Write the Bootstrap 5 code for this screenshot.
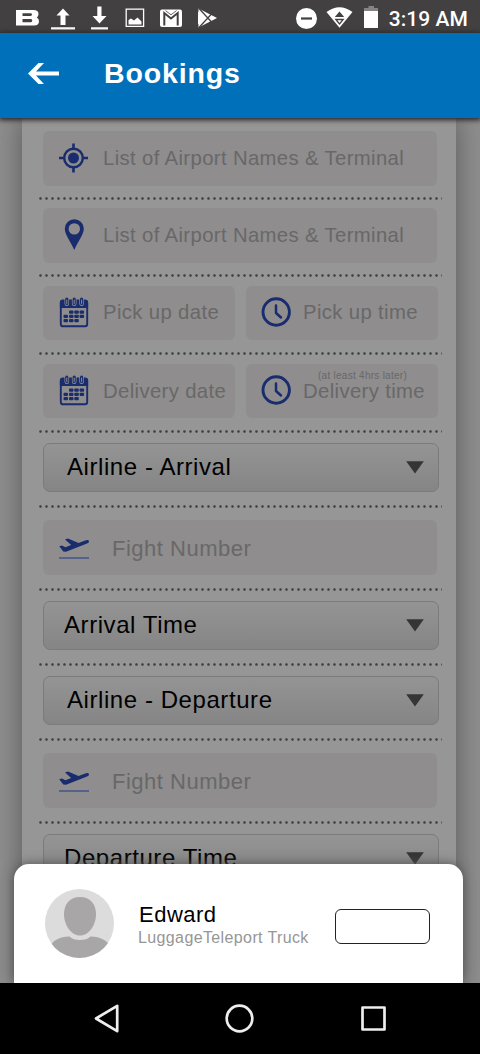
<!DOCTYPE html>
<html lang="en">
<head>
<meta charset="utf-8">
<meta name="viewport" content="width=device-width, initial-scale=1">
<title>Bookings</title>
<link href="https://cdn.jsdelivr.net/npm/bootstrap@5.3.0/dist/css/bootstrap.min.css" rel="stylesheet">
<style>
body{font-family:"Liberation Sans",Arial,sans-serif;background:#8d8d8d;color:#000}
svg{display:block;flex:none}
.phone{width:480px;height:1054px}
.status{height:33px;background:#424041;color:#fff}
.status .clock{font:500 21px/33px Roboto,sans-serif;letter-spacing:.05px;padding-top:3px}
.topbar{height:85px;background:#0070bb;color:#fff;box-shadow:0 1px 5px 1px #222;z-index:2;padding-left:28px}
.topbar h1{font-size:28.5px;letter-spacing:.85px;line-height:32px;margin:0 0 6px 45px}
.topbar svg{margin-bottom:4px}
.screen{height:865px;background:#8e8e8e}
.panel{width:434px;margin-left:22px;height:865px;background:#969696;padding:13px 15px 0 21px;box-shadow:0 0 26px 1px #5c5c5c}
.field{height:55px;width:394px;border-radius:6px;background:#8f8d8e;color:#686868;font-size:20.3px;letter-spacing:.37px;padding:0 0 2px 16px;white-space:nowrap}
.field svg{width:30px;margin-right:14px}
.place span{padding-top:2px}
.pair{height:54px;width:395px;gap:11px}
.pair .field{height:54px;width:192px}
.pair .field+.field{padding-left:15px}
.pair .field+.field svg{margin-right:12px}
.nudge{padding-top:2px}
.hint{font-size:10px;letter-spacing:.27px;line-height:10px;left:15px;top:-3px}
.flight{font-size:22px;letter-spacing:.5px;padding-bottom:0}
.flight svg{margin-right:23px}
.flight span{padding-top:1px}
.picker{height:49px;width:396px;border:1px solid #7b7b7b;border-bottom-width:1.5px;border-radius:7px;background:linear-gradient(#949494,#858585);font-size:24px;letter-spacing:.57px;padding:0 14px 0 23px}
.picker span{margin-bottom:2px}
.picker.time{padding-left:20px}
.dots{height:3px;width:402px;margin:13px 0 10px -4px;background:radial-gradient(circle at 1.5px 1.5px,#404040 .8px,rgba(64,64,64,0) 1.7px) 0 0/6px 3px repeat-x;box-sizing:content-box;padding-right:1px}
.d-a{margin-top:11px;margin-bottom:8px}
.d-b{margin-top:11px;margin-bottom:9px}
.d-c{margin-top:12px;margin-bottom:9px}
.d-d{margin-top:12px}
.d-e{margin-bottom:12px}
.sheet{left:14px;bottom:0;width:449px;height:119px;background:#fff;border-radius:15px 15px 0 0;box-shadow:0 0 12px #505050;padding:0 33px 0 31px}
.driver{margin-left:24px;width:197px;padding-top:2px}
.driver .who{font-size:22px;letter-spacing:.5px;line-height:25px;padding-left:1px}
.driver .org{font-size:16px;letter-spacing:.38px;line-height:19px;color:#969696;white-space:nowrap;margin-top:1px}
.action{width:95px;height:35px;border:1px solid #222;border-radius:6px;background:#fff;padding:0;margin-top:6px}
.navkeys{height:71px;background:#000}
</style>
</head>
<body>
<svg width="0" height="0" class="position-absolute" aria-hidden="true">
  <symbol id="cal" viewBox="0 0 30 31">
    <path d="M1.800 5.500Q1.800 3.500 3.800 3.500H26.200Q28.200 3.500 28.200 5.500V27Q28.200 29.300 26 29.300H4Q1.800 29.300 1.800 27Z" fill="none" stroke="#182c6e" stroke-width="1.900"/>
    <path d="M.9 11V6Q1 3 4 3H26Q29 3 29.100 6V11Z" fill="#182c6e"/>
    <g stroke="#8f8d8e" stroke-linecap="round" stroke-width="4.600"><path d="M7.800 2V6.700M15.200 2V6.700M22.600 2V6.700"/></g>
    <g stroke="#182c6e" stroke-linecap="round" stroke-width="3.200"><path d="M7.800 2.200V6.400M15.200 2.200V6.400M22.600 2.200V6.400"/></g>
    <g stroke="#8f8d8e" stroke-linecap="round" stroke-width="1"><path d="M7.800 3V6.500M15.200 3V6.500M22.600 3V6.500"/></g>
    <g fill="#182c6e"><rect x="10" y="13.500" width="4.500" height="3.200" rx="1"/><rect x="15.300" y="13.500" width="4.500" height="3.200" rx="1"/><rect x="20.600" y="13.500" width="4.500" height="3.200" rx="1"/><rect x="4.500" y="17.800" width="4.500" height="3.200" rx="1"/><rect x="10" y="17.800" width="4.500" height="3.200" rx="1"/><rect x="15.300" y="17.800" width="4.500" height="3.200" rx="1"/><rect x="20.600" y="17.800" width="4.500" height="3.200" rx="1"/><rect x="4.500" y="22.100" width="4.500" height="3.200" rx="1"/><rect x="10" y="22.100" width="4.500" height="3.200" rx="1"/><rect x="15.300" y="22.100" width="4.500" height="3.200" rx="1"/></g>
  </symbol>
  <symbol id="clk" viewBox="0 0 30 30"><circle cx="15.200" cy="15" r="13.200" fill="none" stroke="#182c6e" stroke-width="2.900"/><path d="M15 8.500V16L20 20.500" fill="none" stroke="#182c6e" stroke-width="2.500" stroke-linecap="round" stroke-linejoin="round"/></symbol>
  <symbol id="fly" viewBox="0 0 30 22"><path d="M.2 9.200 3 8.600 6.400 10.200 12.200 8 6 2.600 9 1.500 19.500 6 27 3.300Q29.800 2.500 30 4.400 30 5.600 28 6.500L7 14.800 4.300 14.500Z" fill="#182c6e"/><path d="M0 21H30" stroke="#425487" stroke-width="1.500"/></symbol>
  <symbol id="tri" viewBox="0 0 18 13"><path d="M.2.300H17.800L9 12.600Z" fill="#353535"/></symbol>
</svg>

<div class="phone d-flex flex-column overflow-hidden">
  <div class="status d-flex">
    <svg width="230" height="33" viewBox="0 0 230 33" fill="#fff">
      <path fill-rule="evenodd" d="M16 10H33.500Q38.500 10 38.500 14 38.500 16.500 36.800 17.500 39 18.500 39 21.300 39 25.500 34 25.500H16ZM22.500 13.300V16H30.500Q32 16 32 14.600T30.500 13.300ZM22.500 19V22.200H30.800Q32.300 22.200 32.300 20.600T30.800 19Z"/>
      <path d="M63 8.500 69.500 15.500H65.500V25H60.500V15.500H56.500ZM51 27.300H75V29.500H51ZM97.300 6.500H101.500V16H106.500L99.500 23.500 92.500 16H97.300ZM91 27.300H108V29.500H91Z"/>
      <path fill="none" stroke="#fff" stroke-width="1.300" d="M126.200 9.200H143.600V26.400H126.200Z"/><path d="M128.500 24.500V20L131 18.500 134 20.500 137.500 17.500 141.500 21.500V24.500Z"/>
      <rect x="160" y="9.500" width="22" height="17.500" rx="2"/><path d="M164.300 25.500V13L171 18.500 177.700 13V25.500" fill="none" stroke="#424041" stroke-width="2"/><path d="M165.500 10.600 171 14.800 176.500 10.600" fill="none" stroke="#424041" stroke-width=".8"/>
      <path d="M198.500 8.500 217 18 198.500 27.500Z"/><path d="M199 8.500 212 22.500M199 27.500 212 13.500" stroke="#424041" stroke-width="1.300"/><path d="M198 11.500V24.500L204.500 18Z"/>
    </svg>
    <svg width="86" height="33" viewBox="295 0 86 33" class="ms-auto">
      <circle cx="306.500" cy="18.500" r="10.500" fill="#fff"/><path d="M301 18.500H312" stroke="#424041" stroke-width="2.200"/>
      <path d="M326.500 12Q339.500 2.500 352.500 12L339.500 27.800Z" fill="#fff"/><path d="M339.500 11.500 344.200 17H334.800Z" fill="#424041"/><path d="M335.800 19.500H343.200L339.500 24Z" fill="none" stroke="#424041" stroke-width="1.300"/>
      <path d="M364 11V8H368.500V6H374V8H378V11Z" fill="#858384"/><path d="M364 11H378V28H364Z" fill="#fff"/>
    </svg>
    <span class="clock ms-2 me-2 pe-1">3:19 AM</span>
  </div>
  <header class="topbar d-flex align-items-center position-relative">
    <svg width="31" height="21" viewBox="0 0 31 21"><path d="M0 10.500 10.500 0H16L8 8.500H31V12.500H8L16 21H10.500Z" fill="#fff"/></svg>
    <h1 class="fw-bold">Bookings</h1>
  </header>
  <main class="screen position-relative overflow-hidden">
    <div class="panel">
      <div class="field place d-flex align-items-center"><svg height="30" viewBox="0 0 30 30"><g fill="none" stroke="#182c6e"><circle cx="14.500" cy="15" r="9.300" stroke-width="2.400"/><path d="M14.500 .5V6M14.500 24V29.500M0 15H5.500M23.500 15H29" stroke-width="2.600"/></g><circle cx="14.500" cy="15" r="5.500" fill="#182c6e"/></svg><span>List of Airport Names &amp; Terminal</span></div>
      <div class="dots d-a"></div>
      <div class="field place d-flex align-items-center"><svg height="31" viewBox="0 0 30 31"><path fill-rule="evenodd" d="M15.300.300A9.500 9.500 0 0 1 24.800 9.800C24.800 15.500 19 22.500 15.300 31 11.500 22.500 5.800 15.500 5.800 9.800A9.500 9.500 0 0 1 15.300.300ZM15.300 4.200A5.700 5.700 0 1 0 15.300 15.600 5.700 5.700 0 1 0 15.300 4.200Z" fill="#182c6e"/></svg><span>List of Airport Names &amp; Terminal</span></div>
      <div class="dots d-b"></div>
      <div class="pair d-flex">
        <div class="field d-flex align-items-center"><svg height="31"><use href="#cal"/></svg>Pick up date</div>
        <div class="field d-flex align-items-center"><svg height="30"><use href="#clk"/></svg>Pick up time</div>
      </div>
      <div class="dots d-c"></div>
      <div class="pair d-flex">
        <div class="field d-flex align-items-center"><svg height="31"><use href="#cal"/></svg><span class="nudge">Delivery date</span></div>
        <div class="field d-flex align-items-center"><svg height="30"><use href="#clk"/></svg><span class="nudge position-relative">Delivery time<small class="hint position-absolute">(at least 4hrs later)</small></span></div>
      </div>
      <div class="dots d-d"></div>
      <div class="picker d-flex align-items-center justify-content-between"><span>Airline - Arrival</span><svg width="18" height="13"><use href="#tri"/></svg></div>
      <div class="dots d-e"></div>
      <div class="field flight d-flex align-items-center"><svg height="22"><use href="#fly"/></svg><span>Fight Number</span></div>
      <div class="dots"></div>
      <div class="picker time d-flex align-items-center justify-content-between"><span>Arrival Time</span><svg width="18" height="13"><use href="#tri"/></svg></div>
      <div class="dots"></div>
      <div class="picker d-flex align-items-center justify-content-between"><span>Airline - Departure</span><svg width="18" height="13"><use href="#tri"/></svg></div>
      <div class="dots d-e"></div>
      <div class="field flight d-flex align-items-center"><svg height="22"><use href="#fly"/></svg><span>Fight Number</span></div>
      <div class="dots"></div>
      <div class="picker time d-flex align-items-center justify-content-between"><span>Departure Time</span><svg width="18" height="13"><use href="#tri"/></svg></div>
    </div>
    <section class="sheet position-absolute d-flex align-items-center">
      <svg width="69" height="69" viewBox="0 0 69 69"><clipPath id="av"><circle cx="34.500" cy="34.500" r="34.500"/></clipPath><g clip-path="url(#av)"><path d="M0 0H69V69H0Z" fill="#dcdcdc"/><path d="M35 8C45 8 51 15 51 25 51 36 44 46.500 35 46.500S19 36 19 25C19 15 25 8 35 8Z" fill="#a8a6a7"/><path d="M5 58Q9 48 24.500 47.500 28 51 35 51T45.500 47.500Q61 48 65 58V70H5Z" fill="#a8a6a7"/></g></svg>
      <div class="driver"><div class="who">Edward</div><div class="org">LuggageTeleport Truck</div></div>
      <button type="button" class="action" aria-label="Action"></button>
    </section>
  </main>
  <nav class="navkeys">
    <svg width="480" height="71" viewBox="0 0 480 71" fill="none" stroke="#eee" stroke-width="2.700" stroke-linejoin="round"><path d="M117.200 22.800V48.200L96 35.500Z"/><circle cx="239.500" cy="35.500" r="12.800"/><path d="M362.500 24.500H384.500V46.500H362.500Z"/></svg>
  </nav>
</div>
<script src="https://cdn.jsdelivr.net/npm/bootstrap@5.3.0/dist/js/bootstrap.bundle.min.js"></script>
</body>
</html>
